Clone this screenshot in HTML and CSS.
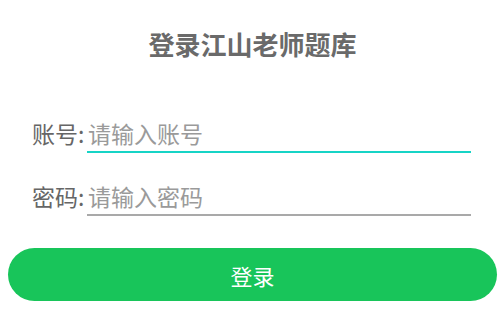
FILE: index.html
```html
<!DOCTYPE html>
<html lang="zh-CN">
<head>
    <meta charset="UTF-8">
    <meta name="viewport" content="width=device-width, initial-scale=1.0">
    <title>登录江山老师题库</title>
    <link rel="stylesheet" href="styles.css">
</head>
<body>

    <!-- 登录表单 -->
    <div class="login">
        <h1 class="title">登录江山老师题库</h1>

        <div class="field">
            <label class="field-label" for="account">账号:</label>
            <input class="field-input active" id="account" type="text" placeholder="请输入账号">
        </div>

        <div class="field">
            <label class="field-label" for="password">密码:</label>
            <input class="field-input" id="password" type="password" placeholder="请输入密码">
        </div>

        <button class="login-btn">登录</button>
    </div>

</body>
</html>
```

FILE: styles.css
```css
/* 基础样式 */
body {
    margin: 0;
    padding: 0;
    background: #ffffff;
    font-family: "Noto Sans CJK SC", "Noto Sans", sans-serif;
}

.login {
    display: flex;
    flex-direction: column;
    padding: 0 5px 0 8px;
}

.title {
    margin: 25px 0 0 0;
    font-size: 26px;
    line-height: 38px;
    font-weight: bold;
    color: #6a6a6a;
    text-align: center;
}

/* 输入行 */
.field {
    display: flex;
    align-items: flex-end;
    margin: 0 26px 0 24px;
    height: 36px;
}

.field:nth-of-type(1) {
    margin-top: 54px;
}

.field + .field {
    margin-top: 27px;
}

.field-label {
    font-size: 23px;
    line-height: 32px;
    color: #666666;
    padding-bottom: 4px;
    width: 55px;
    flex-shrink: 0;
}

.field-input {
    flex: 1;
    min-width: 0;
    border: none;
    border-bottom: 2px solid #a9a9a9;
    outline: none;
    padding: 0 0 3px 1px;
    height: 36px;
    box-sizing: border-box;
    font-size: 23px;
    font-family: inherit;
    color: #666666;
    background: transparent;
}

.field-input::placeholder {
    color: #9a9a9a;
}

.field-input.active {
    border-bottom-color: #17d4c6;
}

/* 登录按钮 */
.login-btn {
    margin-top: 32px;
    height: 53px;
    border: none;
    border-radius: 27px;
    background: #18c55a;
    color: #ffffff;
    font-size: 22px;
    font-family: inherit;
    cursor: pointer;
}
```
